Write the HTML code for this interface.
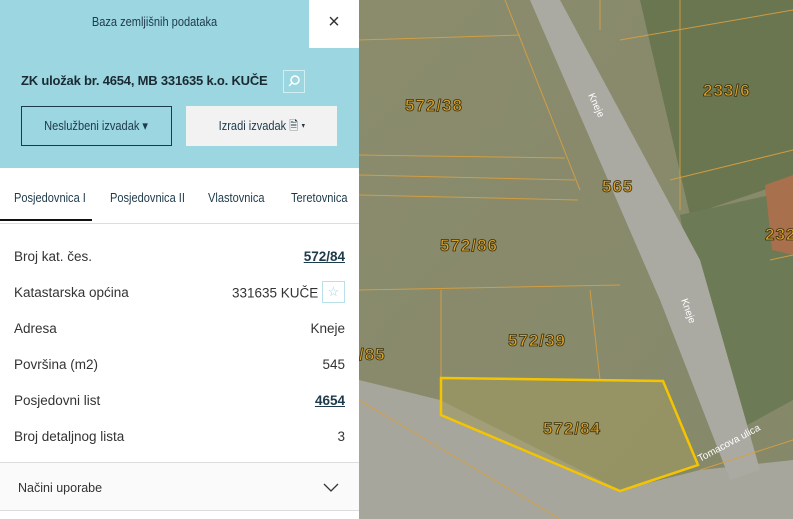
<!DOCTYPE html>
<html><head><meta charset="utf-8"><style>
*{margin:0;padding:0;box-sizing:border-box}
body{width:793px;height:519px;overflow:hidden;position:relative;font-family:"Liberation Sans",sans-serif;background:#fff}
#panel{position:absolute;left:0;top:0;width:359px;height:519px;background:#fff}
.top{position:absolute;left:0;top:0;width:359px;height:168px;background:#9cd6e0}
.title{position:absolute;left:0;top:0;width:309px;height:48px;line-height:44px;text-align:center;font-size:13px;color:#1d3a4a;transform:scaleX(.85)}
.close{position:absolute;left:309px;top:0;width:50px;height:48px;background:#fff;text-align:center;line-height:44px;font-size:20px;color:#333}
.zk{position:absolute;left:21px;top:73px;font-size:13px;font-weight:bold;color:#1a2a33;letter-spacing:-.2px}
.srch{position:absolute;left:283px;top:70px;width:22px;height:23px;border:1px solid #cfeff4}
.b1{position:absolute;left:21px;top:106px;width:151px;height:40px;border:1px solid #1d3a4a;font-size:13px;color:#1d3a4a;text-align:center;line-height:38px}
.b2{position:absolute;left:186px;top:106px;width:151px;height:40px;background:#f2f2f2;font-size:13px;color:#1d3a4a;text-align:center;line-height:40px}
.tabs{position:absolute;top:168px;left:0;width:359px;height:56px;border-bottom:1px solid #ddd}
.tab{position:absolute;top:22px;font-size:13px;color:#1d3a4a;transform-origin:left;transform:scaleX(.85)}
.row{position:absolute;left:14px;width:331px;font-size:13.5px;color:#333;display:flex;justify-content:space-between}
.row a{color:#1d3a4a;font-weight:bold;text-decoration:underline}
.acc{position:absolute;left:0;top:462px;width:359px;height:49px;background:#fafafa;border-top:1px solid #ddd;border-bottom:1px solid #ddd;font-size:12.5px;color:#333;padding:18px 18px}
</style></head><body>
<svg style="position:absolute;left:359px;top:0" width="434" height="519" viewBox="359 0 434 519">
<defs><linearGradient id="g" x1="0" y1="0" x2="1" y2="1"><stop offset="0" stop-color="#8a8c6c"/><stop offset="1" stop-color="#85886a"/></linearGradient></defs>
<rect x="359" y="0" width="434" height="519" fill="url(#g)"/>
<polygon points="640,0 793,0 793,180 690,215" fill="#6a7650"/>
<polygon points="680,215 793,190 793,400 720,440" fill="#6c7a55"/>
<polygon points="359,380 440,400 620,490 700,470 793,460 793,519 359,519" fill="#a6a69c"/>
<polygon points="530,0 560,0 700,260 760,470 730,480 660,300" fill="#aaaaa2"/>
<polygon points="765,185 793,175 793,255 772,250" fill="#a8704c"/>
<polygon points="441,378 663,381 698,465 620,491 441,415" fill="#a09a60" opacity=".6"/>
<g stroke="#d9a040" stroke-width="1" fill="none" opacity=".9">
<path d="M359,40 L520,35 M359,155 L565,158 M359,175 L575,180 M359,195 L578,200 M359,290 L620,285 M505,0 L580,190 M441,290 L441,415 M359,400 L560,519 M600,0 L600,30 M620,40 L793,10 M670,180 L793,150 M680,0 L680,210 M770,260 L793,255 M700,470 L793,440 M590,290 L600,380"/>
</g>
<polygon points="441,378 663,381 698,465 620,491 441,415" fill="none" stroke="#f5c400" stroke-width="2.5"/>
<g font-family="Liberation Sans" font-weight="bold" font-size="17" fill="#d8a030" stroke="#3a300a" stroke-width=".8" letter-spacing="1">
<text x="405" y="111">572/38</text><text x="703" y="96">233/6</text><text x="602" y="192">565</text>
<text x="440" y="251">572/86</text><text x="508" y="346">572/39</text><text x="543" y="434">572/84</text>
<text x="359" y="360">/85</text><text x="765" y="240">232</text></g>
<g font-family="Liberation Sans" font-size="10" fill="#fff">
<text transform="translate(588,95) rotate(65)">Kneje</text>
<text transform="translate(681,300) rotate(70)">Kneje</text>
<text transform="translate(700,462) rotate(-28)">Tomacova ulica</text></g>
</svg>
<div id="panel">
<div class="top"></div>
<div class="title">Baza zemljišnih podataka</div>
<div class="close">×</div>
<div class="zk">ZK uložak br. 4654, MB 331635 k.o. KUČE</div>
<div class="srch"><svg width="20" height="21"><circle cx="11" cy="9" r="4" stroke="#fff" stroke-width="1.5" fill="none"/><path d="M8 12 L5 15" stroke="#fff" stroke-width="1.5"/></svg></div>
<div class="b1"><span style="display:inline-block;transform:scaleX(.85)">Neslužbeni izvadak ▾</span></div>
<div class="b2"><span style="display:inline-block;transform:scaleX(.85)">Izradi izvadak 🗎 ▾</span></div>
<div class="tabs">
<div class="tab" style="left:14px">Posjedovnica I</div>
<div class="tab" style="left:110px">Posjedovnica II</div>
<div class="tab" style="left:208px">Vlastovnica</div>
<div class="tab" style="left:291px">Teretovnica</div>
<div style="position:absolute;left:0;top:51px;width:92px;height:2px;background:#111"></div>
</div>
<div class="row" style="top:249px"><span>Broj kat. čes.</span><a>572/84</a></div>
<div class="row" style="top:285px"><span>Katastarska općina</span><span>331635 KUČE <span style="display:inline-block;width:23px;height:22px;border:1px solid #b9e0e8;vertical-align:middle;margin-top:-4px;color:#9cd6e0;text-align:center;font-size:13px;line-height:20px">☆</span></span></div>
<div class="row" style="top:321px"><span>Adresa</span><span>Kneje</span></div>
<div class="row" style="top:357px"><span>Površina (m2)</span><span>545</span></div>
<div class="row" style="top:393px"><span>Posjedovni list</span><a>4654</a></div>
<div class="row" style="top:429px"><span>Broj detaljnog lista</span><span>3</span></div>
<div class="acc">Načini uporabe<svg style="position:absolute;right:20px;top:20px" width="16" height="10"><path d="M1 1 L8 8 L15 1" stroke="#333" fill="none" stroke-width="1.3"/></svg></div>
</div>
</body></html>
